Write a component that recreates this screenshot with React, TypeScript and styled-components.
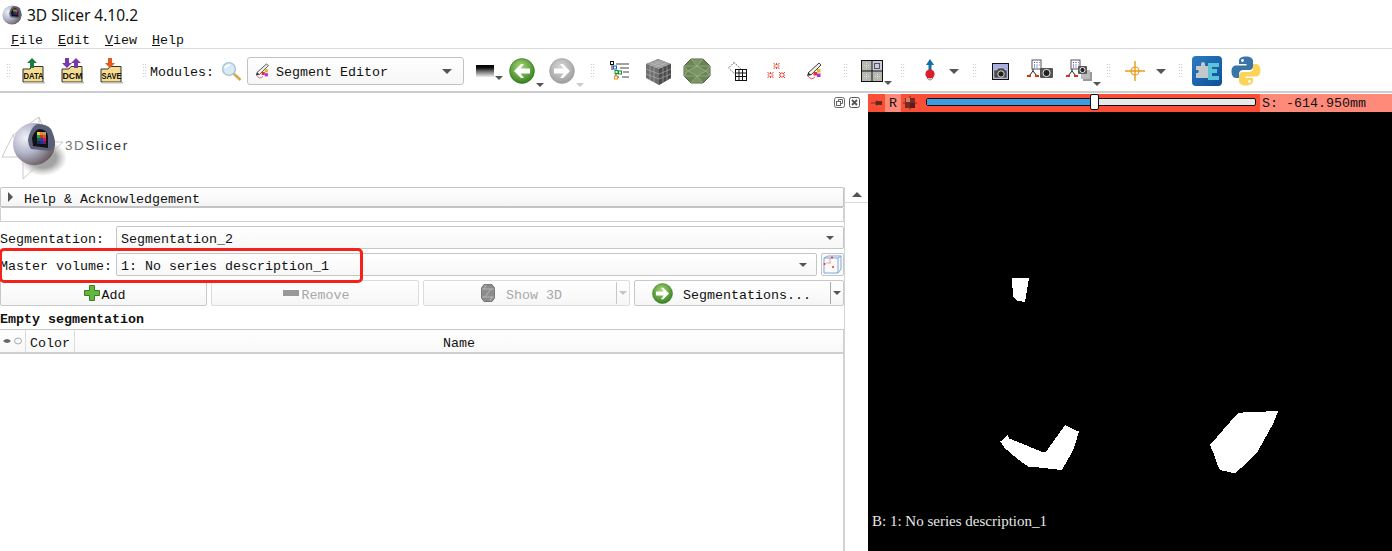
import React from "react";
import styled, { createGlobalStyle } from "styled-components";

const Global = createGlobalStyle`
  html, body { margin: 0; padding: 0; background: #fff; }
  body { width: 1392px; height: 551px; overflow: hidden; font-family: "Liberation Mono", monospace; font-size: 13.33px; color: #111; }
  * { box-sizing: border-box; }
`;

const Page = styled.div`display:flex;flex-direction:column;width:1392px;height:551px;overflow:hidden;`;
const TitleBar = styled.div`height:29px;display:flex;align-items:center;padding-left:2px;gap:5px;font-family:"Noto Sans",sans-serif;font-size:15.5px;color:#111;`;
const MenuBar = styled.div`height:20px;display:flex;padding:3px 0 0 11px;gap:15px;align-items:center;border-bottom:1px solid #dcdcdc;`;
const MenuItem = styled.span`width:32px;&::first-letter{text-decoration:underline;}`;
const ToolBar = styled.div`height:44px;display:flex;align-items:center;padding-top:2px;border-bottom:2px solid #cdcdcd;position:relative;`;
const Slot = styled.div<{ $w: number; $ml: number }>`width:${p => p.$w}px;margin-left:${p => p.$ml}px;flex:none;display:flex;align-items:center;justify-content:center;position:relative;`;
const Grip = styled.div<{ $ml: number }>`width:5px;height:16px;margin-left:${p => p.$ml}px;flex:none;background-image:radial-gradient(circle,#bcbcbc 0.7px,transparent 0.8px);background-size:2.5px 3px;`;
const Txt = styled.span`padding-top:4px;`;
const ModLabel = styled(Txt)`margin-left:3px;width:64px;flex:none;padding-top:2px;`;
const ModCombo = styled.div`margin-left:5px;width:217px;height:28px;flex:none;border:1px solid #c2c2c2;border-radius:3px;background:linear-gradient(#fff,#f6f6f6);display:flex;align-items:center;padding:0 11px 0 7px;gap:5px;`;
const ComboText = styled(Txt)`flex:1;`;
const ModComboText = styled(ComboText)`padding-top:2px;`;
const Caret = styled.i<{ $c?: string; $s?: number }>`display:block;flex:none;width:0;height:0;border-left:${p => p.$s ?? 5}px solid transparent;border-right:${p => p.$s ?? 5}px solid transparent;border-top:${p => p.$s ?? 5}px solid ${p => p.$c ?? "#555"};`;
const CornerCaret = styled(Caret)`position:absolute;right:-9px;bottom:-3px;`;

const Main = styled.div`flex:1;display:flex;min-height:0;`;
const Left = styled.div`width:868px;flex:none;display:flex;position:relative;`;
const Form = styled.div`width:844px;flex:none;display:flex;flex-direction:column;`;
const Scroll = styled.div`flex:1;display:flex;flex-direction:column;align-items:stretch;border-left:1px solid #d4d4d4;margin-top:94px;`;
const ScrollUp = styled.div`height:16px;border-bottom:1px solid #d9d9d9;display:flex;align-items:center;justify-content:center;`;
const UpCaret = styled.i`display:block;width:0;height:0;border-left:5px solid transparent;border-right:5px solid transparent;border-bottom:5px solid #555;`;
const DockIcons = styled.div`position:absolute;right:8px;top:4px;display:flex;gap:4px;`;
const LogoArea = styled.div`height:94px;display:flex;align-items:center;padding:8px 0 0 1px;`;
const LogoText = styled.div`font-family:"Liberation Sans",sans-serif;font-size:13.5px;letter-spacing:1.6px;color:#777;margin:2px 0 0 0;b{font-weight:400;color:#333;}`;
const Collapsible = styled.div`height:21px;border:1px solid #c4c4c4;border-bottom-width:2px;border-radius:2px;background:linear-gradient(#fff,#f4f4f4);display:flex;align-items:center;padding-left:7px;gap:11px;`;
const RightTri = styled.i`display:block;width:0;height:0;border-top:5px solid transparent;border-bottom:5px solid transparent;border-left:5px solid #555;`;
const Spacer = styled.div`height:14px;border:1px solid #d0d0d0;border-top:none;`;
const Row = styled.div<{ $mt: number }>`display:flex;align-items:center;height:23px;margin-top:${p => p.$mt}px;`;
const RowLabel = styled(Txt)`width:116px;flex:none;white-space:nowrap;overflow:hidden;`;
const Combo = styled.div`flex:1;height:23px;border:1px solid #c6c6c6;border-radius:2px;background:linear-gradient(#fff,#f7f7f7);display:flex;align-items:center;padding:0 9px 0 4px;`;
const SmallBtn = styled.div`width:23px;height:23px;margin-left:4px;flex:none;border:1px solid #c6c6c6;border-radius:2px;background:#fafafa;display:flex;align-items:center;justify-content:center;`;
const ButtonRow = styled.div`display:grid;grid-template-columns:207px 208px 207px 210px;column-gap:4px;height:26px;margin-top:4px;`;
const Btn = styled.div<{ $off?: boolean; $gap?: number }>`border:1px solid ${p => p.$off ? "#dcdcdc" : "#c8c8c8"};border-radius:2px;background:linear-gradient(#fff,#f6f6f6);display:flex;align-items:center;justify-content:center;padding-left:2px;gap:${p => p.$gap ?? 0}px;color:${p => p.$off ? "#a8a8a8" : "#111"};`;
const SplitBtn = styled(Btn)`justify-content:flex-start;padding-left:0;`;
const SplitBody = styled.div`flex:1;height:100%;display:flex;align-items:center;`;
const SplitArrow = styled.div<{ $off?: boolean }>`width:13px;height:100%;display:flex;align-items:center;justify-content:center;flex:none;position:relative;&::before{content:"";position:absolute;left:0;top:1px;bottom:1px;width:1px;background:${p => p.$off ? "#c8c8c8" : "#a8a8a8"};}`;
const IconBox = styled.span<{ $ml: number }>`margin-left:${p => p.$ml}px;display:flex;`;
const BtnLabel = styled(Txt)<{ $ml: number }>`margin-left:${p => p.$ml}px;`;
const StatusLabel = styled.div`font-weight:700;height:23px;line-height:27px;flex:none;`;
const Table = styled.div`flex:1;border-right:1px solid #d0d0d0;border-top:1px solid #c8c8c8;`;
const THead = styled.div`height:24px;display:grid;grid-template-columns:26px 49px 1fr;background:linear-gradient(#fff,#f8f8f8);border-bottom:2px solid #cfcfcf;`;
const Th = styled.div`display:flex;align-items:center;justify-content:center;border-right:1px solid #dcdcdc;&:last-child{border-right:none;}`;
const Highlight = styled.div`position:absolute;left:-1px;top:155px;width:364px;height:35px;border:3px solid #f3231a;border-radius:5px;pointer-events:none;`;

const Right = styled.div`flex:1;display:flex;flex-direction:column;background:#000;margin-top:1px;position:relative;`;
const SliceBar = styled.div`height:18px;background:#fb4e37;display:flex;align-items:stretch;flex:none;`;
const PinBox = styled.div`width:17px;display:flex;align-items:center;justify-content:center;`;
const RBox = styled.div`width:16px;background:#ff8a7a;text-align:center;line-height:20px;`;
const LinkBox = styled.div`width:18px;display:flex;align-items:center;justify-content:center;`;
const SliderTrack = styled.div`margin:4px 0 0 7px;width:330px;height:8px;border:1px solid #111;border-radius:2px;background:#e8e8e8;position:relative;`;
const SliderFill = styled.div`height:100%;background:#3d9be0;border-radius:1px 0 0 1px;`;
const Thumb = styled.div`position:absolute;top:-5px;width:9px;height:16px;margin-left:-4px;background:#fff;border:1px solid #111;border-radius:2px;`;
const Readout = styled.div`margin-left:4px;flex:1;background:#ff8a7a;padding-left:2px;line-height:20px;white-space:nowrap;`;
const SliceView = styled.div`flex:1;position:relative;min-height:0;`;
const Mask = styled.svg`display:block;width:100%;height:100%;`;
const Caption = styled.div`position:absolute;left:4px;bottom:21px;color:#e8e8e8;font-family:"Liberation Serif",serif;font-size:15px;`;

const SphereBody: React.FC<{ id: string }> = ({ id }) => (
  <>
    <defs>
      <radialGradient id={id} cx="30%" cy="35%" r="85%">
        <stop offset="0" stopColor="#f0f2f8" /><stop offset=".45" stopColor="#b0b2c8" /><stop offset=".8" stopColor="#75686e" /><stop offset="1" stopColor="#4c4046" />
      </radialGradient>
    </defs>
    <circle cx="33" cy="32" r="21" fill={`url(#${id})`} />
    <path d="M27 28 Q29 16 36 12 Q46 12 50 17 Q54 25 54 33 L49 39 L30 37 Q27 33 27 28Z" fill="#596078" />
    <path d="M31 26 Q33 19 38 17 Q46 17 47 24 L47 36 L32 34Z" fill="#111118" />
    <rect x="36" y="20" width="3" height="3" fill="#e8d040" /><rect x="39" y="20" width="3" height="3" fill="#e88a20" /><rect x="42" y="20" width="3" height="3" fill="#a8a080" />
    <rect x="36" y="23" width="3" height="3" fill="#20a050" /><rect x="39" y="23" width="3" height="3" fill="#d83020" /><rect x="42" y="23" width="3" height="3" fill="#e85020" />
    <rect x="36" y="26" width="3" height="3" fill="#206038" /><rect x="39" y="26" width="3" height="3" fill="#2040c0" /><rect x="42" y="26" width="3" height="3" fill="#c02050" />
    <rect x="36" y="29" width="3" height="3" fill="#183060" /><rect x="39" y="29" width="3" height="3" fill="#203090" /><rect x="42" y="29" width="3" height="3" fill="#702060" />
  </>
);

const TitleSphere = () => (
  <svg width="20" height="20" viewBox="11 10 44 44"><SphereBody id="t" /></svg>
);

const LogoSphere = () => (
  <svg width="64" height="64" viewBox="0 0 64 64" overflow="visible">
    <defs>
      <radialGradient id="ls"><stop offset=".55" stopColor="#666" stopOpacity=".6" /><stop offset="1" stopColor="#888" stopOpacity="0" /></radialGradient>
    </defs>
    <ellipse cx="42" cy="46" rx="24" ry="18" fill="url(#ls)" />
    <path d="M1 45 L12 23 L38 5 V14 M1 45 H24 M22 67 V44 M22 67 L62 30 H52 M12 23 L22 44 M38 5 L44 20" stroke="#bdbdbd" strokeWidth=".8" fill="none" />
    <SphereBody id="l" />
  </svg>
);

const Folder: React.FC<{ label: string; arrows: string[] }> = ({ label, arrows }) => (
  <svg width="24" height="26" viewBox="0 0 24 26">
    <path d="M1 11 H8 L10 8.5 H21 V24 H1Z" fill="#f5dc8e" stroke="#333" />
    <rect x="2" y="24" width="21" height="1.5" fill="#bbb" />
    <text x="11.5" y="21" textAnchor="middle" fontFamily="Liberation Sans" fontSize="8.5" fontWeight="700" textLength="20" lengthAdjust="spacingAndGlyphs" fill="#111">{label}</text>
    {arrows.map((a, i) => {
      const [x, dir, c] = a.split(":");
      const X = +x;
      return dir === "u"
        ? <path key={i} d={`M${X} 0 L${X + 5} 5 H${X + 2} V10 H${X - 2} V5 H${X - 5}Z`} fill={c} />
        : <path key={i} d={`M${X} 10 L${X + 5} 5 H${X + 2} V0 H${X - 2} V5 H${X - 5}Z`} fill={c} />;
    })}
  </svg>
);

const Magnifier = () => (
  <svg width="21" height="21" viewBox="0 0 21 21">
    <line x1="12" y1="12" x2="19.5" y2="19" stroke="#d9a74a" strokeWidth="2.6" />
    <circle cx="8" cy="8" r="6.4" fill="#d6ebf6" stroke="#a9c3d4" strokeWidth="1.4" />
    <path d="M4 7 Q6 4 9 4" stroke="#fff" strokeWidth="1.6" fill="none" />
  </svg>
);

const Pen: React.FC<{ s?: number }> = ({ s = 16 }) => (
  <svg width={s} height={s} viewBox="0 0 18 18" style={{ flex: "none" }}>
    <path d="M2 11 L13 1 L15 3 L5 13Z" fill="#eee" stroke="#333" strokeWidth=".9" />
    <path d="M2 11 L5 13 L1 14Z" fill="#222" />
    <path d="M2 14 Q5 19 9 15" stroke="#d9304a" strokeWidth=".8" fill="none" />
    <rect x="11" y="7" width="3.5" height="3.5" fill="#f0b020" /><rect x="7.5" y="10" width="3.5" height="3.5" fill="#e23030" /><rect x="11" y="11.5" width="3.5" height="3.5" fill="#b030d0" />
  </svg>
);

const Gradient = () => (
  <svg width="18" height="12" viewBox="0 0 18 12">
    <defs><linearGradient id="gr" x1="0" x2="0" y1="0" y2="1"><stop offset="0" stopColor="#000" /><stop offset=".25" stopColor="#111" /><stop offset=".5" stopColor="#666" /><stop offset="1" stopColor="#f0f0f0" /></linearGradient></defs>
    <rect width="18" height="12" fill="url(#gr)" />
  </svg>
);

const Nav: React.FC<{ dir: "l" | "r"; id: string; from: string; to: string; edge: string; s: number }> = ({ dir, id, from, to, edge, s }) => (
  <svg width={s} height={s} viewBox="0 0 26 26">
    <defs><radialGradient id={id} cx="45%" cy="35%" r="70%"><stop offset="0" stopColor={from} /><stop offset="1" stopColor={to} /></radialGradient></defs>
    <circle cx="13" cy="13" r="12.4" fill={`url(#${id})`} stroke={edge} strokeWidth=".6" />
    <path d={dir === "l" ? "M5 13 L12 6 H15 L11.5 10.5 H21 V15.5 H11.5 L15 20 H12Z" : "M21 13 L14 6 H11 L14.5 10.5 H5 V15.5 H14.5 L11 20 H14Z"} fill="#fff" />
  </svg>
);

const Tree = () => (
  <svg width="20" height="20" viewBox="0 0 20 20" fill="none">
    <path d="M2 4V9M6 9V16H9M6 12H9" stroke="#333" />
    <path d="M6 3H19M10 7H19M13 11H19M12 16H19" stroke="#444" strokeWidth="1.2" />
    <rect x="0.5" y="0.5" width="3" height="3" stroke="#111" fill="#fff" />
    <rect x="3.5" y="5" width="3" height="3" stroke="#1060e0" fill="#fff" />
    <rect x="5" y="9.5" width="3" height="3" stroke="#109030" fill="#fff" />
    <rect x="8.5" y="10" width="3" height="3" stroke="#109030" fill="#fff" />
    <rect x="4.5" y="15" width="3" height="3" stroke="#e89010" fill="#fff" />
  </svg>
);

const Cube = () => (
  <svg width="27" height="27" viewBox="0 0 27 27">
    <path d="M13 1 L26 6 V20 L14 27 L1 20 V6Z" fill="#6e6e6e" />
    <path d="M13 1 L26 6 L14 11 L1 6Z" fill="#9c9c9c" />
    <path d="M14 11 L26 6 V20 L14 27Z" fill="#4c4c4c" />
    <path d="M5 4.5 L18 9.5 M9 3 L22 8 M22 4.5 L9 9.5 M18 3 L5 8 M5 8 V23 M9 9.5 V25 M18 10 V25 M22 8.5 V23 M1 11 L14 16 L26 11 M1 16 L14 21 L26 16" stroke="#c4c4c4" strokeWidth=".5" fill="none" />
  </svg>
);

const Gem = () => (
  <svg width="28" height="26" viewBox="0 0 28 26">
    <path d="M8 1 H20 L27 8 V18 L20 25 H8 L1 18 V8Z" fill="#6a8456" stroke="#4c6040" />
    <path d="M8 1 L14 8 L20 1 M1 8 L14 8 L27 8 M1 18 L14 18 L27 18 M8 25 L14 18 L20 25 M14 8 L5 13 L14 18 L23 13Z M1 8 L5 13 L1 18 M27 8 L23 13 L27 18" stroke="#a8bd96" strokeWidth=".6" fill="#86a06e" fillOpacity=".6" />
  </svg>
);

const GridIcon = () => (
  <svg width="19" height="19" viewBox="0 0 19 19">
    <path d="M6 0.5 L0.5 6 L8 13 L13 7Z" fill="#fff" stroke="#333" strokeWidth=".8" strokeDasharray="1.4 1" />
    <rect x="7.5" y="7.5" width="11" height="11" fill="#fff" stroke="#111" />
    <path d="M11 7.5V18.5M14.5 7.5V18.5M7.5 11H18.5M7.5 14.5H18.5" stroke="#111" />
  </svg>
);

const Sparks = () => {
  const star = (x: number, y: number, k: number) => (
    <path key={k} d={`M${x - 3} ${y}H${x - 1}M${x + 1} ${y}H${x + 3}M${x} ${y - 3}V${y - 1}M${x} ${y + 1}V${y + 3}M${x - 3} ${y - 3}L${x - 1} ${y - 1}M${x + 3} ${y - 3}L${x + 1} ${y - 1}M${x - 3} ${y + 3}L${x - 1} ${y + 1}M${x + 3} ${y + 3}L${x + 1} ${y + 1}`} stroke="#e03010" strokeWidth=".9" />
  );
  return <svg width="19" height="18" viewBox="0 0 19 18">{[star(9.5, 4, 1), star(3.5, 13, 2), star(15, 13, 3)]}</svg>;
};

const LayoutIcon = () => (
  <svg width="22" height="22" viewBox="0 0 22 22">
    <rect x=".5" y=".5" width="21" height="21" fill="#b4b8ae" stroke="#111" />
    <rect x="11" y="1" width="10" height="10" fill="#c6cbe2" />
    <rect x="13.5" y="3.5" width="5" height="5" fill="none" stroke="#555" />
    <path d="M11 0V22M0 11H22" stroke="#111" />
    <path d="M3 5.5H8M5.5 3V8M3 16.5H8M5.5 14V19M14 16.5H19M16.5 14V19" stroke="#eee" strokeWidth=".7" strokeDasharray="1 1" />
  </svg>
);

const Crosshair3D = () => (
  <svg width="12" height="24" viewBox="0 0 12 24">
    <path d="M6 0 L10 6 H7.5 V12 H4.5 V6 H2Z" fill="#1070a8" />
    <circle cx="6" cy="15" r="4.6" fill="#d8202a" />
    <path d="M3 19 Q6 23 9 19" stroke="#888" fill="none" />
  </svg>
);

const Camera = () => (
  <svg width="17" height="17" viewBox="0 0 17 17">
    <rect x=".5" y=".5" width="16" height="16" fill="#a8aee0" stroke="#111" />
    <path d="M2 7H5L6 5H12L13 7H15V15H2Z" fill="#4a4a4a" stroke="#ddd" strokeWidth=".5" />
    <circle cx="9" cy="11" r="3.2" fill="#222" stroke="#ddd" strokeWidth="1" />
  </svg>
);

const Scene: React.FC<{ multi?: boolean }> = ({ multi }) => (
  <svg width="26" height="24" viewBox="0 0 26 24">
    <rect x="5" y="1" width="9" height="9" fill="#fff" stroke="#555" />
    <path d="M7 3.5H8M9.5 3.5H10.5M12 3.5H12.5M7 6H8M9.5 6H10.5M12 6H12.5M7 8H8M9.5 8H10.5" stroke="#2040d0" />
    <path d="M2 17 L6 12 L10 17 M6 10V12" stroke="#222" fill="none" />
    <rect x="0" y="16" width="4" height="2" fill="#e03010" /><rect x="8" y="16" width="4" height="2" fill="#e03010" />
    {multi && <rect x="17" y="13" width="9" height="9" fill="#999" />}
    {multi && <rect x="15" y="11" width="9" height="9" fill="#bbb" />}
    <rect x={multi ? 12 : 13} y={multi ? 7 : 9} width={multi ? 9 : 13} height={multi ? 8 : 10} rx="1" fill="#555" />
    <circle cx={multi ? 16.5 : 19.5} cy={multi ? 11 : 14} r={multi ? 2.6 : 3.6} fill="#222" stroke="#eee" />
  </svg>
);

const Cross = () => (
  <svg width="20" height="20" viewBox="0 0 20 20" fill="none" stroke="#e89a1c">
    <path d="M0 10H20M10 0V20" strokeWidth="1.4" />
    <circle cx="10" cy="10" r="4" strokeWidth="1.2" />
  </svg>
);

const Extension = () => (
  <svg width="30" height="30" viewBox="0 0 30 30">
    <defs><linearGradient id="ex" x1="0" x2="1" y1="0" y2="1"><stop offset="0" stopColor="#2a7cc0" /><stop offset="1" stopColor="#0f4f98" /></linearGradient></defs>
    <rect width="30" height="30" rx="4" fill="url(#ex)" />
    <path d="M4 10H9V8a2 2 0 0 1 4 0V10H16V22H4V17H6a2 2 0 0 0 0-3H4Z" fill="#c4c8cc" />
    <path d="M16 7H27V11H20V13H25V17H20V20H27V24H16Z" fill="#5cc4d8" />
  </svg>
);

const Python = () => (
  <svg width="30" height="30" viewBox="0 0 30 30">
    <path d="M15 0.5C9 .5 8 3 8 5V8H15.5V9.5H5C2 9.5 .5 12 .5 15.5S2 22 5 22H8V18C8 15.5 10 14 12 14H18.5C20.5 14 22 12.5 22 10.5V5C22 2.5 19.5 .5 15 .5Z" fill="#3a75a8" />
    <path d="M15 29.5C21 29.5 22 27 22 25V22H14.5V20.5H25C28 20.5 29.5 18 29.5 14.5S28 8 25 8H22V12C22 14.5 20 16 18 16H11.5C9.5 16 8 17.5 8 19.5V25C8 27.5 10.5 29.5 15 29.5Z" fill="#fdd45a" />
    <circle cx="11.5" cy="4.5" r="1.4" fill="#fff" /><circle cx="18.5" cy="25.5" r="1.4" fill="#fff" />
  </svg>
);

const Plus = () => (
  <svg width="16" height="16" viewBox="0 0 16 16">
    <path d="M5.5 .5H10.5V5.5H15.5V10.5H10.5V15.5H5.5V10.5H.5V5.5H5.5Z" fill="#62b83c" stroke="#3c7c24" />
  </svg>
);
const Minus = () => <svg width="16" height="6" viewBox="0 0 16 6"><rect width="16" height="6" fill="#999" /></svg>;
const Gem3D = () => (
  <svg width="14" height="18" viewBox="0 0 14 18">
    <path d="M3 .5H11L13.5 4V14L11 17.5H3L.5 14V4Z" fill="#8c8c8c" stroke="#777" />
    <path d="M1 5H13M1 13H13M4 13L10 5M5 1L3 5M9 17L11 13" stroke="#c8c8c8" strokeWidth=".7" />
  </svg>
);
const VolumeBox = () => (
  <svg width="19" height="19" viewBox="0 0 19 19" fill="none">
    <path d="M1 3L5 1H18V14L15 18H1ZM1 3H15V18M15 3L18 1" stroke="#7fa8d8" />
    <path d="M7 3V8M3 8H8" stroke="#e87070" strokeWidth=".6" />
    <circle cx="9" cy="2.5" r="1" fill="#e03030" /><circle cx="1.5" cy="9" r="1" fill="#e03030" /><circle cx="10" cy="12" r="1" fill="#e03030" />
  </svg>
);
const EyeIcon = () => (
  <svg width="20" height="8" viewBox="0 0 20 8">
    <path d="M0 4Q4 0 8 4Q4 8 0 4Z" fill="#666" />
    <ellipse cx="15" cy="4" rx="3.5" ry="3" fill="none" stroke="#aaa" />
  </svg>
);
const DockFloat = () => (
  <svg width="11" height="11" viewBox="0 0 11 11" fill="none" stroke="#666">
    <rect x=".5" y=".5" width="10" height="10" rx="2" /><rect x="2.5" y="4.5" width="4" height="4" /><path d="M4.5 4.5V2.5H8.5V6.5H6.5" />
  </svg>
);
const DockClose = () => (
  <svg width="11" height="11" viewBox="0 0 11 11" fill="none" stroke="#555">
    <rect x=".5" y=".5" width="10" height="10" rx="2" /><path d="M3 3L8 8M8 3L3 8" strokeWidth="1.8" />
  </svg>
);
const Pin = () => <svg width="11" height="6" viewBox="0 0 11 6"><path d="M0 3H5M5 1H6V5H5ZM6 1.5H11V4.5H6Z" stroke="#5a2a22" strokeWidth=".8" fill="#5a2a22" /></svg>;
const LinkIcon = () => (
  <svg width="16" height="16" viewBox="0 0 16 16">
    <path d="M1 8H15M8 1V15" stroke="#222" strokeWidth=".6" />
    <rect x="3" y="3" width="10" height="10" fill="#7a2a20" />
    <rect x="4" y="3" width="4" height="4" fill="#d08070" />
    <rect x="8" y="8" width="5" height="5" fill="#5a1c14" />
  </svg>
);

const App: React.FC = () => (
  <Page>
    <Global />
    <TitleBar><TitleSphere /><span>3D Slicer 4.10.2</span></TitleBar>
    <MenuBar>
      <MenuItem>File</MenuItem><MenuItem>Edit</MenuItem><MenuItem>View</MenuItem><MenuItem>Help</MenuItem>
    </MenuBar>
    <ToolBar>
      <Grip $ml={6} />
      <Slot $w={24} $ml={11}><Folder label="DATA" arrows={["10:u:#1f7a40"]} /></Slot>
      <Slot $w={24} $ml={15}><Folder label="DCM" arrows={["6:d:#7a3aa8", "15:u:#7a3aa8"]} /></Slot>
      <Slot $w={24} $ml={15}><Folder label="SAVE" arrows={["10:d:#e05a1c"]} /></Slot>
      <Grip $ml={18} />
      <ModLabel>Modules:</ModLabel>
      <Slot $w={21} $ml={7}><Magnifier /></Slot>
      <ModCombo><Pen /><ModComboText>Segment Editor</ModComboText><Caret /></ModCombo>
      <Slot $w={18} $ml={12}><Gradient /><CornerCaret $s={4} /></Slot>
      <Slot $w={26} $ml={15}><Nav dir="l" id="n1" from="#a8d878" to="#2e7a18" edge="#2e6a18" s={26} /><CornerCaret $s={4} /></Slot>
      <Slot $w={26} $ml={14}><Nav dir="r" id="n2" from="#d8d8d8" to="#9a9a9a" edge="#999" s={26} /><CornerCaret $s={4} $c="#ccc" /></Slot>
      <Grip $ml={15} />
      <Slot $w={20} $ml={15}><Tree /></Slot>
      <Slot $w={27} $ml={15}><Cube /></Slot>
      <Slot $w={28} $ml={11}><Gem /></Slot>
      <Slot $w={19} $ml={17}><GridIcon /></Slot>
      <Slot $w={19} $ml={20}><Sparks /></Slot>
      <Slot $w={18} $ml={20}><Pen s={18} /></Slot>
      <Grip $ml={19} />
      <Slot $w={22} $ml={13}><LayoutIcon /><CornerCaret $s={4} /></Slot>
      <Grip $ml={17} />
      <Slot $w={12} $ml={19}><Crosshair3D /></Slot>
      <Slot $w={10} $ml={13}><Caret /></Slot>
      <Grip $ml={13} />
      <Slot $w={17} $ml={15}><Camera /></Slot>
      <Slot $w={26} $ml={18}><Scene /></Slot>
      <Slot $w={26} $ml={13}><Scene multi /><CornerCaret $s={4} /></Slot>
      <Grip $ml={14} />
      <Slot $w={20} $ml={14}><Cross /></Slot>
      <Slot $w={10} $ml={11}><Caret /></Slot>
      <Grip $ml={12} />
      <Slot $w={30} $ml={9}><Extension /></Slot>
      <Slot $w={30} $ml={9}><Python /></Slot>
    </ToolBar>
    <Main>
      <Left>
        <Form>
          <LogoArea>
            <LogoSphere />
            <LogoText>3D<b>Slicer</b></LogoText>
          </LogoArea>
          <Collapsible><RightTri /><Txt>Help &amp; Acknowledgement</Txt></Collapsible>
          <Spacer />
          <Row $mt={4}>
            <RowLabel>Segmentation:</RowLabel>
            <Combo><ComboText>Segmentation_2</ComboText><Caret $s={4.5} /></Combo>
          </Row>
          <Row $mt={4}>
            <RowLabel>Master volume:</RowLabel>
            <Combo><ComboText>1: No series description_1</ComboText><Caret $s={4.5} /></Combo>
            <SmallBtn><VolumeBox /></SmallBtn>
          </Row>
          <ButtonRow>
            <Btn $gap={2}><Plus /><Txt>Add</Txt></Btn>
            <Btn $off $gap={3}><Minus /><Txt>Remove</Txt></Btn>
            <SplitBtn $off>
              <SplitBody><IconBox $ml={57}><Gem3D /></IconBox><BtnLabel $ml={11}>Show 3D</BtnLabel></SplitBody>
              <SplitArrow $off><Caret $s={4} $c="#c4c4c4" /></SplitArrow>
            </SplitBtn>
            <SplitBtn>
              <SplitBody>
                <IconBox $ml={17}><Nav dir="r" id="n3" from="#a8d878" to="#2e7a18" edge="#2e6a18" s={21} /></IconBox>
                <BtnLabel $ml={10}>Segmentations...</BtnLabel>
              </SplitBody>
              <SplitArrow><Caret $s={4} /></SplitArrow>
            </SplitBtn>
          </ButtonRow>
          <StatusLabel>Empty segmentation</StatusLabel>
          <Table>
            <THead>
              <Th><EyeIcon /></Th>
              <Th><Txt>Color</Txt></Th>
              <Th><Txt>Name</Txt></Th>
            </THead>
          </Table>
        </Form>
        <Scroll>
          <ScrollUp><UpCaret /></ScrollUp>
        </Scroll>
        <DockIcons><DockFloat /><DockClose /></DockIcons>
        <Highlight />
      </Left>
      <Right>
        <SliceBar>
          <PinBox><Pin /></PinBox>
          <RBox>R</RBox>
          <LinkBox><LinkIcon /></LinkBox>
          <SliderTrack>
            <SliderFill style={{ width: "50.9%" }} />
            <Thumb style={{ left: "50.9%" }} />
          </SliderTrack>
          <Readout>S: -614.950mm</Readout>
        </SliceBar>
        <SliceView>
          <Mask viewBox="868 112 524 439" shapeRendering="crispEdges">
            <polygon fill="#fff" points="1012,278 1029,278 1025,302 1018,301 1013,297" />
            <polygon fill="#fff" points="1000.3,441.7 1007.7,435 1009,438.3 1041.7,451.7 1046,451.7 1065,425 1079,431.7 1073.3,450 1066.7,461.7 1061.7,470 1036.7,467.3 1028.3,466.7 1016.7,458.3 1005,448.3" />
            <polygon fill="#fff" points="1238.3,412.7 1278.3,411 1273.3,423.3 1256.7,453.3 1250,460 1235,473.3 1220,470 1216.7,463 1215,456.7 1210,445 1231.7,420" />
          </Mask>
          <Caption>B: 1: No series description_1</Caption>
        </SliceView>
      </Right>
    </Main>
  </Page>
);

export default App;
